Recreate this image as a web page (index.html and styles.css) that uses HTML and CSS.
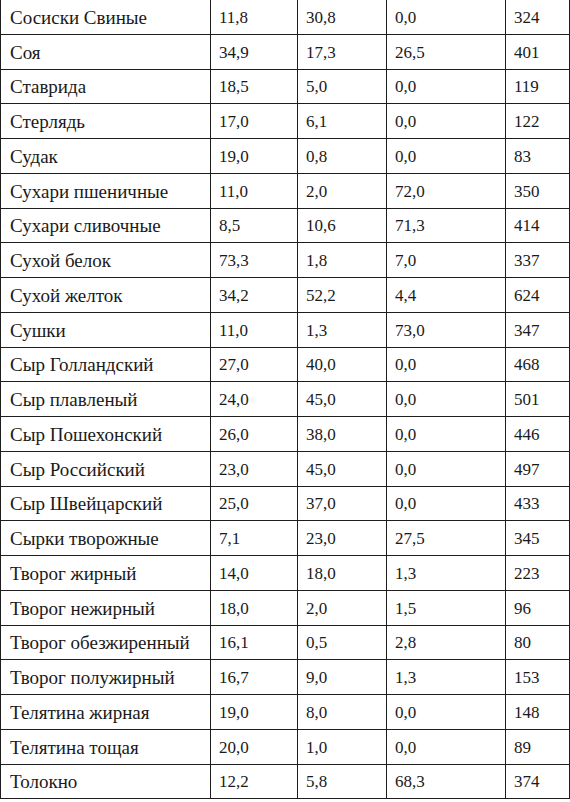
FILE: index.html
```html
<!DOCTYPE html>
<html>
<head>
<meta charset="utf-8">
<link rel="stylesheet" href="styles.css">
</head>
<body>
<table class="food">
<colgroup><col class="c1"><col class="c2"><col class="c3"><col class="c4"><col class="c5"></colgroup>
<tbody>
<tr><td>Сосиски Свиные</td><td>11,8</td><td>30,8</td><td>0,0</td><td>324</td></tr>
<tr><td>Соя</td><td>34,9</td><td>17,3</td><td>26,5</td><td>401</td></tr>
<tr><td>Ставрида</td><td>18,5</td><td>5,0</td><td>0,0</td><td>119</td></tr>
<tr><td>Стерлядь</td><td>17,0</td><td>6,1</td><td>0,0</td><td>122</td></tr>
<tr><td>Судак</td><td>19,0</td><td>0,8</td><td>0,0</td><td>83</td></tr>
<tr><td>Сухари пшеничные</td><td>11,0</td><td>2,0</td><td>72,0</td><td>350</td></tr>
<tr><td>Сухари сливочные</td><td>8,5</td><td>10,6</td><td>71,3</td><td>414</td></tr>
<tr><td>Сухой белок</td><td>73,3</td><td>1,8</td><td>7,0</td><td>337</td></tr>
<tr><td>Сухой желток</td><td>34,2</td><td>52,2</td><td>4,4</td><td>624</td></tr>
<tr><td>Сушки</td><td>11,0</td><td>1,3</td><td>73,0</td><td>347</td></tr>
<tr><td>Сыр Голландский</td><td>27,0</td><td>40,0</td><td>0,0</td><td>468</td></tr>
<tr><td>Сыр плавленый</td><td>24,0</td><td>45,0</td><td>0,0</td><td>501</td></tr>
<tr><td>Сыр Пошехонский</td><td>26,0</td><td>38,0</td><td>0,0</td><td>446</td></tr>
<tr><td>Сыр Российский</td><td>23,0</td><td>45,0</td><td>0,0</td><td>497</td></tr>
<tr><td>Сыр Швейцарский</td><td>25,0</td><td>37,0</td><td>0,0</td><td>433</td></tr>
<tr><td>Сырки творожные</td><td>7,1</td><td>23,0</td><td>27,5</td><td>345</td></tr>
<tr><td>Творог жирный</td><td>14,0</td><td>18,0</td><td>1,3</td><td>223</td></tr>
<tr><td>Творог нежирный</td><td>18,0</td><td>2,0</td><td>1,5</td><td>96</td></tr>
<tr><td>Творог обезжиренный</td><td>16,1</td><td>0,5</td><td>2,8</td><td>80</td></tr>
<tr><td>Творог полужирный</td><td>16,7</td><td>9,0</td><td>1,3</td><td>153</td></tr>
<tr><td>Телятина жирная</td><td>19,0</td><td>8,0</td><td>0,0</td><td>148</td></tr>
<tr><td>Телятина тощая</td><td>20,0</td><td>1,0</td><td>0,0</td><td>89</td></tr>
<tr><td>Толокно</td><td>12,2</td><td>5,8</td><td>68,3</td><td>374</td></tr>
</tbody>
</table>
</body>
</html>
```
FILE: styles.css
```css
html, body {
  margin: 0;
  padding: 0;
  background: #ffffff;
}
body {
  overflow: hidden;
}
.food {
  border-collapse: collapse;
  table-layout: fixed;
  width: 569px;
  margin-top: -1px;
  font-family: "Liberation Serif", "Times New Roman", serif;
  font-size: 17px;
  color: #1a1a1a;
}
.c1 { width: 210px; }
.c2 { width: 87px; }
.c3 { width: 89px; }
.c4 { width: 119px; }
.c5 { width: 64px; }
.food td {
  border: 1px solid #1e1e1e;
  height: 33.75px;
  padding: 2px 0 0 8px;
  box-sizing: border-box;
  vertical-align: middle;
  white-space: nowrap;
  overflow: hidden;
}
.food td:first-child {
  font-size: 19px;
  padding-left: 9px;
}
.food tr {
  height: 34.75px;
}
```
